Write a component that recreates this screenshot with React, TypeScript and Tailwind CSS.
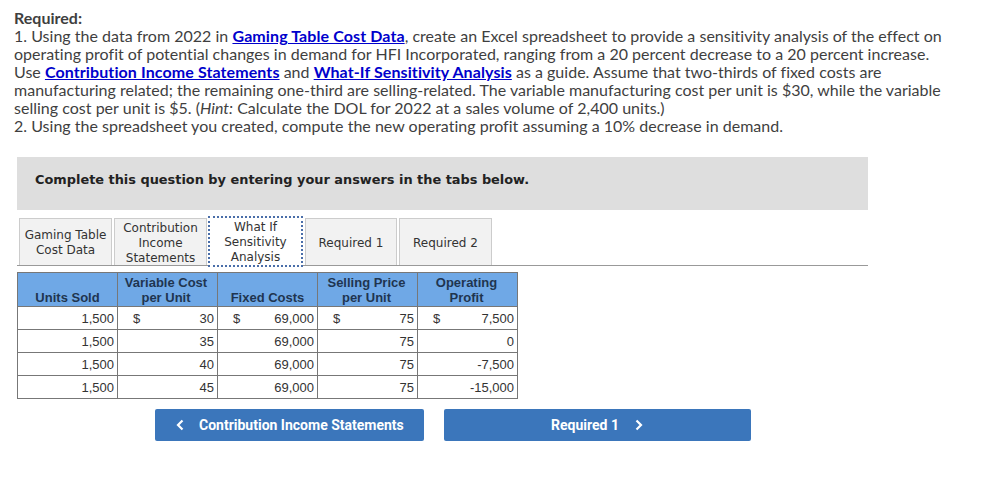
const TABS = [
  { label: "Gaming Table Cost Data", width: "w-[93px]", pad: "pt-[2px]" },
  { label: "Contribution Income Statements", width: "w-[93px]", pad: "pt-[3px]" },
  { label: "What If Sensitivity Analysis", width: "w-[95px]", active: true, pad: "pt-[1px]" },
  { label: "Required 1", width: "w-[92px]", pad: "pt-[3px]" },
  { label: "Required 2", width: "w-[93px]", pad: "pt-[3px]" },
];

const ROWS = [
  { units: "1,500", cost: "30", fixed: "69,000", price: "75", profit: "7,500", dollar: true },
  { units: "1,500", cost: "35", fixed: "69,000", price: "75", profit: "0" },
  { units: "1,500", cost: "40", fixed: "69,000", price: "75", profit: "-7,500" },
  { units: "1,500", cost: "45", fixed: "69,000", price: "75", profit: "-15,000" },
];

function Link({ children }: { children: string }) {
  return <a className="font-bold tracking-[0.1px] text-[#0000cc] underline">{children}</a>;
}

function Cell({ value, dollar }: { value: string; dollar?: boolean }) {
  return (
    <td className="h-[23px] border border-[#777] px-[3px] pb-0 pt-[1px] text-right">
      <div className="flex justify-between pl-[12px]">
        <span>{dollar ? "$" : ""}</span>
        <span>{value}</span>
      </div>
    </td>
  );
}

export default function App() {
  return (
    <div className="h-[497px] w-[998px] overflow-hidden bg-white pl-[14px] pt-[9px]">
      <div className="w-[960px] font-['Lato',sans-serif] text-[16px] leading-[18px] tracking-[0.015px] text-[#3f3f3f]">
        <div className="font-bold">Required:</div>
        <div>
          1. Using the data from 2022 in <Link>Gaming Table Cost Data</Link>, create an Excel spreadsheet to provide a sensitivity analysis of the effect on
          <br />
          operating profit of potential changes in demand for HFI Incorporated, ranging from a 20 percent decrease to a 20 percent increase.
          <br />
          Use <Link>Contribution Income Statements</Link> and <Link>What-If Sensitivity Analysis</Link> as a guide. Assume that two-thirds of fixed costs are
          <br />
          manufacturing related; the remaining one-third are selling-related. The variable manufacturing cost per unit is $30, while the variable
          <br />
          selling cost per unit is $5. (<i>Hint:</i> Calculate the DOL for 2022 at a sales volume of 2,400 units.)
          <br />
          2. Using the spreadsheet you created, compute the new operating profit assuming a 10% decrease in demand.
        </div>
      </div>

      <div className="ml-[3px] mt-[22px] flex h-[53px] w-[851px] items-center bg-[#dedede] pb-[7px] pl-[18px] font-['DejaVu_Sans',sans-serif] text-[12.9px] font-bold text-[#222]">
        Complete this question by entering your answers in the tabs below.
      </div>

      <div className="ml-[3px] mt-[7px] w-[851px]">
        <div className="flex h-[49px] items-end gap-[2px] border-b border-[#999] pl-[2px]">
          {TABS.map((tab) => (
            <div
              key={tab.label}
              className={
                tab.active
                  ? `${tab.width} ${tab.pad} -mb-[2px] -ml-[1px] flex h-[51px] items-center justify-center border-2 border-dotted border-[#4a6ea9] bg-white px-[6px] text-center font-['DejaVu_Sans',sans-serif] text-[12px] leading-[15px] text-[#333]`
                  : `${tab.width} ${tab.pad} flex h-[47px] items-center justify-center border border-b-0 border-[#ccc] bg-[#f2f2f2] px-[4px] text-center font-['DejaVu_Sans',sans-serif] text-[12px] leading-[15px] text-[#333]`
              }
            >
              {tab.label}
            </div>
          ))}
        </div>

        <table className="mt-[6px] w-[501px] table-fixed border-collapse font-['Liberation_Sans',sans-serif] text-[13px] text-[#333]">
          <thead>
            <tr className="h-[34px] bg-[#6fa8e6] font-bold text-[#1f3550]">
              <th className="border border-[#777] pb-[1px] align-bottom leading-[15px]">Units Sold</th>
              <th className="border border-[#777] pb-[1px] pr-[3px] align-bottom leading-[15px]">Variable Cost<br />per Unit</th>
              <th className="border border-[#777] pb-[1px] align-bottom leading-[15px]">Fixed Costs</th>
              <th className="border border-[#777] pb-[1px] pr-[2px] align-bottom leading-[15px]">Selling Price<br />per Unit</th>
              <th className="border border-[#777] pb-[1px] pr-[2px] align-bottom leading-[15px]">Operating<br />Profit</th>
            </tr>
          </thead>
          <tbody>
            {ROWS.map((row, i) => (
              <tr key={i}>
                <td className="h-[23px] border border-[#777] px-[3px] pb-0 pt-[1px] text-right">{row.units}</td>
                <Cell value={row.cost} dollar={row.dollar} />
                <Cell value={row.fixed} dollar={row.dollar} />
                <Cell value={row.price} dollar={row.dollar} />
                <Cell value={row.profit} dollar={row.dollar} />
              </tr>
            ))}
          </tbody>
        </table>
      </div>

      <div className="ml-[141px] mt-[10px] flex gap-[20px] font-['Roboto',sans-serif] text-[14px] font-bold text-white">
        <button className="flex h-[32px] w-[269px] items-center rounded-[2px] bg-[#3b76bb] pl-[20px]">
          <svg width="10" height="12" viewBox="0 0 10 12" className="mr-[14px]">
            <path d="M7.5 1.5 3 6l4.5 4.5" fill="none" stroke="white" strokeWidth="2.2" />
          </svg>
          Contribution Income Statements
        </button>
        <button className="flex h-[32px] w-[307px] items-center rounded-[2px] bg-[#3b76bb] pl-[107px]">
          Required 1
          <svg width="10" height="12" viewBox="0 0 10 12" className="ml-[15px]">
            <path d="M2.5 1.5 7 6l-4.5 4.5" fill="none" stroke="white" strokeWidth="2.2" />
          </svg>
        </button>
      </div>
    </div>
  );
}
